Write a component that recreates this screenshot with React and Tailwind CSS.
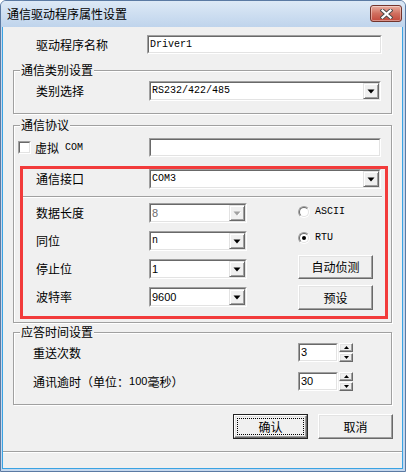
import React from "react";

const MONO = "font-['Liberation_Mono',monospace] text-[10px]";
const SANS = "font-['Liberation_Sans',Arial,sans-serif] text-[11px]";

function Sunken({ className = "", inner = "bg-white", children }) {
  return (
    <div className={`border border-t-[#a0a0a0] border-l-[#a0a0a0] border-r-white border-b-white ${className}`}>
      <div className={`w-full h-full border border-t-[#696969] border-l-[#696969] border-r-[#e3e3e3] border-b-[#e3e3e3] ${inner}`}>
        {children}
      </div>
    </div>
  );
}

function Arrow({ disabled }) {
  return (
    <svg width="8" height="5" viewBox="0 0 8 5">
      {disabled && <path d="M1.5 1h7l-3.5 4z" fill="#ffffff" />}
      <path d="M0.5 0.5h7l-3.5 4z" fill={disabled ? "#a0a0a0" : "#000"} />
    </svg>
  );
}

function DropBtn({ disabled }) {
  return (
    <div className="w-[16px] h-full bg-[#f0f0f0] border border-t-[#e3e3e3] border-l-[#e3e3e3] border-r-[#696969] border-b-[#696969] shadow-[inset_1px_1px_0_#fff,inset_-1px_-1px_0_#a0a0a0] flex items-center justify-center">
      <Arrow disabled={disabled} />
    </div>
  );
}

function Combo({ w, value, font, disabled }) {
  return (
    <Sunken className={`${w} h-[20px]`}>
      <div className="flex h-full">
        <div className={`flex-1 flex items-center pl-[1px] ${font} ${disabled ? "text-[#6d6d6d]" : "text-black"}`}>
          {value}
        </div>
        <DropBtn disabled={disabled} />
      </div>
    </Sunken>
  );
}

function Edit({ w, value, font }) {
  return (
    <Sunken className={`${w} h-[19px]`}>
      <div className={`h-full flex items-center pl-[1px] ${font}`}>{value}</div>
    </Sunken>
  );
}

function Group({ title, className = "", children }) {
  return (
    <div className={`relative ml-[10px] w-[379px] border border-[#a0a0a0] shadow-[inset_1px_1px_0_#fff,1px_1px_0_#fff] flex flex-col ${className}`}>
      <span className="absolute left-[6px] top-[-8px] px-[1px] bg-[#f0f0f0] leading-[14px]">{title}</span>
      {children}
    </div>
  );
}

function PushBtn({ children, className = "" }) {
  return (
    <div className={`bg-[#f0f0f0] border border-t-white border-l-white border-r-[#696969] border-b-[#696969] shadow-[inset_-1px_-1px_0_#a0a0a0,inset_1px_1px_0_#e3e3e3] flex items-center justify-center ${className}`}>
      {children}
    </div>
  );
}

function Radio({ checked }) {
  return (
    <div className="w-[12px] h-[12px] rounded-full border border-t-[#a0a0a0] border-l-[#a0a0a0] border-r-white border-b-white">
      <div className="w-full h-full rounded-full border border-t-[#696969] border-l-[#696969] border-r-[#e3e3e3] border-b-[#e3e3e3] bg-white flex items-center justify-center">
        {checked && <div className="w-[4px] h-[4px] rounded-full bg-black" />}
      </div>
    </div>
  );
}

function SpinArrow({ up }) {
  return (
    <svg width="5" height="3" viewBox="0 0 5 3">
      <path d={up ? "M2.5 0L5 3H0z" : "M0 0h5L2.5 3z"} fill="#000" />
    </svg>
  );
}

function Spin({ value }) {
  return (
    <div className="flex">
      <Sunken className="w-[40px] h-[19px]">
        <div className={`h-full flex items-center pl-[1px] ${SANS}`}>{value}</div>
      </Sunken>
      <div className="ml-[1px] w-[14px] h-[19px] flex flex-col gap-[1px]">
        <PushBtn className="h-[9px] w-full">
          <SpinArrow up />
        </PushBtn>
        <PushBtn className="h-[9px] w-full">
          <SpinArrow />
        </PushBtn>
      </div>
    </div>
  );
}

export default function App() {
  return (
    <div className="w-[406px] h-[472px] flex flex-col bg-[#c5d8ee] border border-[#5b7aa3] rounded-t-[6px] overflow-hidden font-['Noto_Sans_CJK_SC',sans-serif] text-[12px] text-black leading-none">
      {/* Title bar */}
      <div className="h-[26px] flex items-start justify-between bg-linear-to-b from-[#dde9f6] to-[#bfd4ec]">
        <div className="pl-[6px] pt-[6px] leading-[14px] text-[12px] text-black">通信驱动程序属性设置</div>
        <div className="mt-[4px] mr-[3px] w-[32px] h-[17px] rounded-[3px] border border-[#73342c] bg-linear-to-b from-[#e8ada0] via-[#d06f5f] to-[#c2483b] shadow-[inset_0_0_0_1px_rgba(255,255,255,0.4)] flex items-center justify-center">
          <svg width="13" height="10" viewBox="0 0 13 10">
            <path d="M2.5 1.5L10.5 8.5M10.5 1.5L2.5 8.5" stroke="#4a4a4a" strokeWidth="4" strokeLinecap="square" />
            <path d="M2.5 1.5L10.5 8.5M10.5 1.5L2.5 8.5" stroke="#fff" strokeWidth="2.2" strokeLinecap="square" />
          </svg>
        </div>
      </div>

      {/* Body */}
      <div className="flex-1 ml-[1px] mr-[2px] mb-[2px] bg-[#f0f0f0] border border-t-0 border-[#3aa3e3] flex flex-col">
        <div className="mt-[8px] h-[19px] flex items-center">
          <div className="pl-[33px] w-[144px]">驱动程序名称</div>
          <Edit w="w-[235px]" value="Driver1" font={MONO} />
        </div>

        <Group title="通信类别设置" className="mt-[16px] h-[44px]">
          <div className="mt-[10px] h-[20px] flex items-center">
            <div className="pl-[22px] w-[135px]">类别选择</div>
            <Combo w="w-[232px]" value="RS232/422/485" font={MONO} />
          </div>
        </Group>

        <Group title="通信协议" className="mt-[11px] h-[198px]">
          <div className="mt-[12px] h-[19px] flex items-center">
            <div className="ml-[4px]">
              <Sunken className="w-[13px] h-[13px]" />
            </div>
            <div className="ml-[4px] w-[114px] flex items-center">
              <span>虚拟</span>
              <span className={`ml-[6px] ${MONO}`}>COM</span>
            </div>
            <Edit w="w-[232px]" value="" font={MONO} />
          </div>

          <div className="mt-[12px] h-[20px] flex items-center">
            <div className="pl-[22px] w-[135px]">通信接口</div>
            <Combo w="w-[232px]" value="COM3" font={MONO} />
          </div>

          <div className="mt-[7px] ml-[9px] w-[359px] h-[2px] border-t border-t-[#a0a0a0] border-b border-b-white" />

          <div className="mt-[5px] flex">
            <div className="flex flex-col gap-[8px]">
              <div className="h-[20px] flex items-center">
                <div className="pl-[22px] w-[135px]">数据长度</div>
                <Combo w="w-[98px]" value="8" font={SANS} disabled />
              </div>
              <div className="h-[20px] flex items-center">
                <div className="pl-[22px] w-[135px]">同位</div>
                <Combo w="w-[98px]" value="n" font={MONO} />
              </div>
              <div className="h-[20px] flex items-center">
                <div className="pl-[22px] w-[135px]">停止位</div>
                <Combo w="w-[98px]" value="1" font={SANS} />
              </div>
              <div className="h-[20px] flex items-center">
                <div className="pl-[22px] w-[135px]">波特率</div>
                <Combo w="w-[98px]" value="9600" font={SANS} />
              </div>
            </div>

            <div className="ml-[51px] flex flex-col">
              <div className="h-[18px] flex items-center">
                <Radio />
                <span className={`ml-[5px] ${MONO}`}>ASCII</span>
              </div>
              <div className="mt-[8px] h-[18px] flex items-center">
                <Radio checked />
                <span className={`ml-[5px] ${MONO}`}>RTU</span>
              </div>
              <PushBtn className="mt-[8px] w-[75px] h-[24px]">自动侦测</PushBtn>
              <PushBtn className="mt-[6px] w-[75px] h-[25px]">预设</PushBtn>
            </div>
          </div>

          <div className="absolute left-[6px] top-[40px] w-[368px] h-[153px] border-[3px] border-[#f23b3b] pointer-events-none" />
        </Group>

        <Group title="应答时间设置" className="mt-[9px] h-[73px]">
          <div className="mt-[10px] h-[19px] flex items-center">
            <div className="pl-[19px] w-[284px]">重送次数</div>
            <Spin value="3" />
          </div>
          <div className="mt-[10px] h-[19px] flex items-center">
            <div className="pl-[19px] w-[284px] flex items-center">
              <span>通讯逾时（单位：</span>
              <span className={SANS}>100</span>
              <span>毫秒）</span>
            </div>
            <Spin value="30" />
          </div>
        </Group>

        <div className="mt-[9px] h-[25px] flex">
          <div className="ml-[230px] w-[75px] h-[25px] border border-[#222]">
            <PushBtn className="w-full h-full p-[2px]">
              <div className="w-full h-full border border-dotted border-black flex items-center justify-center">确认</div>
            </PushBtn>
          </div>
          <PushBtn className="ml-[10px] w-[75px] h-[25px]">取消</PushBtn>
        </div>

        <div className="mt-[12px] flex-1 border-t border-[#a0a0a0] shadow-[inset_0_1px_0_#fff]" />
      </div>
    </div>
  );
}
